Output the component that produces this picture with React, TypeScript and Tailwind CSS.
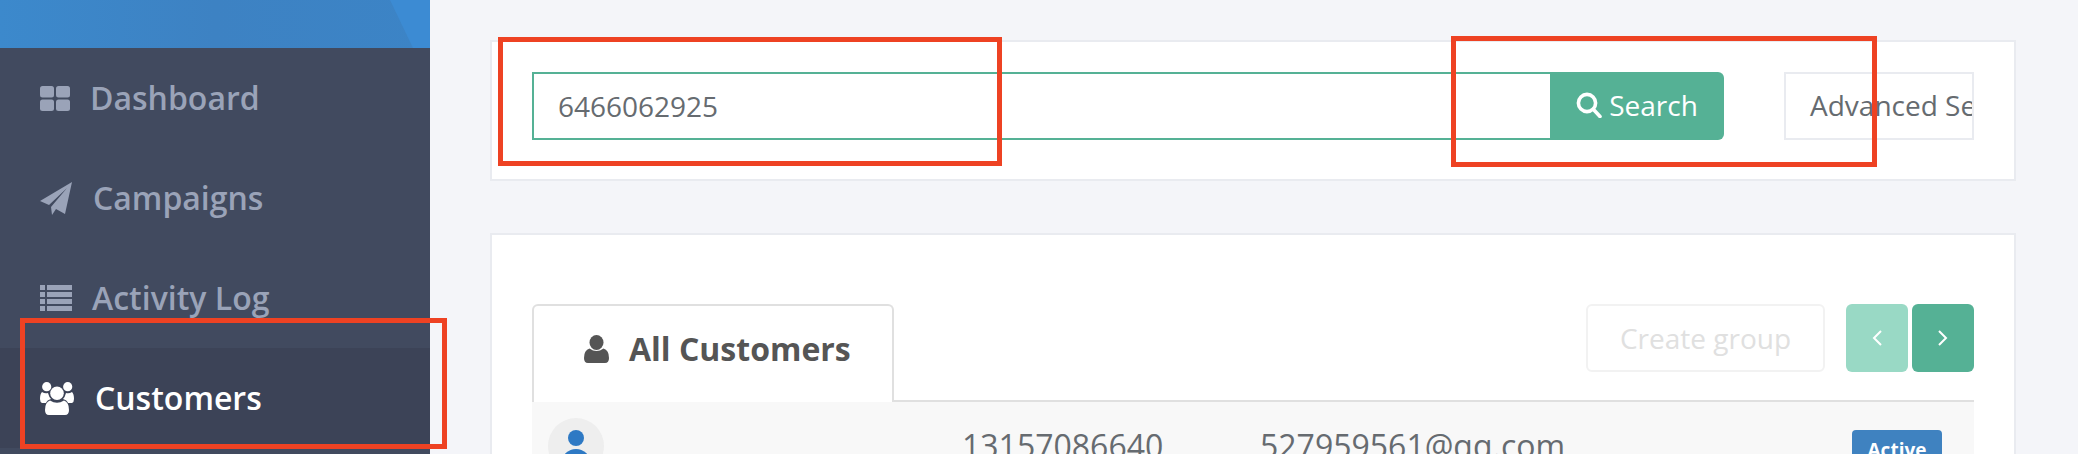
import React from 'react';

const DashboardIcon = () => (
  <svg width="30" height="25" viewBox="0 0 30 25" fill="currentColor">
    <rect x="0" y="0" width="14" height="11.5" rx="2.5" />
    <rect x="16" y="0" width="14" height="11.5" rx="2.5" />
    <rect x="0" y="13.5" width="14" height="11.5" rx="2.5" />
    <rect x="16" y="13.5" width="14" height="11.5" rx="2.5" />
  </svg>
);

const PlaneIcon = () => (
  <svg width="32" height="33" viewBox="0 0 32 33" fill="currentColor">
    <path d="M32 0 L0 19 L9 23 L27 6 L11 25 L12 33 L16 27 L25 32 Z" />
  </svg>
);

const ListIcon = () => (
  <svg width="32" height="26" viewBox="0 0 32 26" fill="currentColor">
    <rect x="0" y="0" width="5" height="5" />
    <rect x="7" y="0" width="25" height="5" />
    <rect x="0" y="7" width="5" height="5" />
    <rect x="7" y="7" width="25" height="5" />
    <rect x="0" y="14" width="5" height="5" />
    <rect x="7" y="14" width="25" height="5" />
    <rect x="0" y="21" width="5" height="5" />
    <rect x="7" y="21" width="25" height="5" />
  </svg>
);

const UsersIcon = () => (
  <svg width="34" height="33" viewBox="0 0 34 33" fill="currentColor">
    <circle cx="6.7" cy="4.7" r="4.6" />
    <circle cx="27.7" cy="4.7" r="4.6" />
    <path d="M2 10 Q5 12 8 11 Q9 15 11 17 Q7 18 6 21 L2 21 Q0 20 0 17 Q0 12 2 10 Z" />
    <path d="M32 10 Q29 12 26 11 Q25 15 23 17 Q27 18 28 21 L32 21 Q34 20 34 17 Q34 12 32 10 Z" />
    <circle cx="17" cy="11.3" r="6.8" />
    <path d="M10 18.5 Q17 23 24 18.5 Q29 20 29 28 Q29 33 25 33 L9 33 Q5 33 5 28 Q5 20 10 18.5 Z" />
  </svg>
);

const UserIcon = () => (
  <svg width="25" height="28" viewBox="0 0 25 28" fill="currentColor">
    <ellipse cx="12.5" cy="7.5" rx="7" ry="7.5" />
    <path d="M5.5 13.5 Q12.5 18.5 19.5 13.5 Q25 15 25 23 Q25 28 21 28 L4 28 Q0 28 0 23 Q0 15 5.5 13.5 Z" />
  </svg>
);

const SearchIcon = () => (
  <svg width="26" height="26" viewBox="0 0 26 26" fill="none" stroke="currentColor" strokeWidth="3.6">
    <circle cx="11" cy="11" r="8.6" />
    <path d="M17.5 17.5 L24 24.5" strokeLinecap="round" />
  </svg>
);

const navItems = [
  { label: 'Dashboard', icon: <DashboardIcon />, iconBox: 'w-[50px]' },
  { label: 'Campaigns', icon: <PlaneIcon />, iconBox: 'w-[53px]' },
  { label: 'Activity Log', icon: <ListIcon />, iconBox: 'w-[52px]' },
];

function Sidebar() {
  return (
    <aside className="w-[430px] shrink-0 bg-[#414a5f]">
      <div className="relative h-12 overflow-hidden bg-gradient-to-r from-[#3c89cc] via-[#3d82c3] to-[#3c84c6]">
        <svg className="absolute right-0 top-0" width="40" height="48" viewBox="0 0 40 48" fill="#3c8bd3">
          <path d="M0 0 L23 48 L40 48 L40 0 Z" />
        </svg>
      </div>
      {navItems.map((item) => (
        <a key={item.label} className="flex h-[100px] items-center pl-10 text-[#9aa3b8]">
          <span className={`${item.iconBox} shrink-0`}>{item.icon}</span>
          <span className="text-[32px] font-semibold">{item.label}</span>
        </a>
      ))}
      <a className="flex h-[100px] items-center bg-[#3c4357] pl-10 text-white">
        <span className="w-[55px] shrink-0">
          <UsersIcon />
        </span>
        <span className="text-[32px] font-semibold">Customers</span>
      </a>
    </aside>
  );
}

function SearchCard() {
  return (
    <section className="flex h-[141px] shrink-0 items-start border-2 border-[#e9ebf0] bg-white px-[40px] pt-[30px]">
      <div className="flex h-[68px] flex-1">
        <div className="flex flex-1 items-center border-2 border-r-0 border-[#55b195] pl-6 text-[28px] text-[#666b70]">
          6466062925
        </div>
        <button className="flex w-[174px] items-center justify-center gap-[7px] rounded-r-md bg-[#55b195] pb-[2px] text-[28px] text-white">
          <SearchIcon />
          Search
        </button>
      </div>
      <div className="ml-[60px] flex h-[68px] w-[190px] items-center overflow-hidden whitespace-nowrap border-2 border-[#e9ebf0] pb-[2px] pl-6 text-[28px] text-[#666b70]">
        Advanced Search
      </div>
    </section>
  );
}

function CustomersCard() {
  return (
    <section className="mt-[52px] flex-1 border-2 border-[#e9ebf0] bg-white px-[40px] pt-[69px]">
      <div className="flex items-start justify-between border-b-2 border-[#e0e0e0]">
        <div className="-mb-[2px] flex h-[98px] w-[362px] items-center gap-5 rounded-t-md border-2 border-b-0 border-[#e0e0e0] bg-white pb-[10px] pl-[50px] text-[#555555]">
          <UserIcon />
          <span className="text-[32px] font-bold">All Customers</span>
        </div>
        <div className="flex gap-1">
          <button className="mr-[17px] h-[68px] w-[239px] rounded-md border-2 border-[#f2f2f2] text-[28px] text-[#e0e0e0]">
            Create group
          </button>
          <button className="flex h-[68px] w-[62px] items-center justify-center rounded-md bg-[#99d9c5]">
            <svg width="10" height="16" viewBox="0 0 10 16" fill="none" stroke="white" strokeWidth="2">
              <path d="M9 1 L2 8 L9 15" />
            </svg>
          </button>
          <button className="flex h-[68px] w-[62px] items-center justify-center rounded-md bg-[#55b195]">
            <svg width="10" height="16" viewBox="0 0 10 16" fill="none" stroke="white" strokeWidth="2">
              <path d="M1 1 L8 8 L1 15" />
            </svg>
          </button>
        </div>
      </div>
      <div className="grid h-[100px] grid-cols-[414px_298px_1fr_90px] items-start bg-[#f8f8f8] pl-4 pr-8 pt-4">
        <div className="flex h-14 w-14 justify-center overflow-hidden rounded-full bg-[#eeeeee] pt-3">
          <svg className="shrink-0" width="32" height="44" viewBox="0 0 32 44" fill="#2e79c4">
            <circle cx="16" cy="8" r="8" />
            <ellipse cx="16" cy="32" rx="14" ry="13" />
          </svg>
        </div>
        <div className="mt-[6px] text-[32px] leading-[44px] text-[#666b70]">13157086640</div>
        <div className="mt-[6px] text-[32px] leading-[44px] text-[#666b70]">527959561@qq.com</div>
        <span className="mt-3 flex h-10 items-center justify-center rounded bg-[#3f82c0] text-[19px] font-bold text-white">
          Active
        </span>
      </div>
    </section>
  );
}

function App() {
  return (
    <div className="relative flex h-[454px] overflow-hidden bg-[#f4f5f9] font-['Open_Sans',sans-serif]">
      <Sidebar />
      <main className="flex min-w-0 flex-1 flex-col pl-[60px] pr-[62px] pt-10">
        <SearchCard />
        <CustomersCard />
      </main>
      {/* red annotations on top of the screenshot */}
      <div className="absolute left-[498px] top-[37px] h-[129px] w-[504px] border-[5px] border-[#ee4223]" />
      <div className="absolute left-[1451px] top-[36px] h-[131px] w-[426px] border-[5px] border-[#ee4223]" />
      <div className="absolute left-[20px] top-[318px] h-[131px] w-[427px] border-[5px] border-[#ee4223]" />
    </div>
  );
}

export default App;
